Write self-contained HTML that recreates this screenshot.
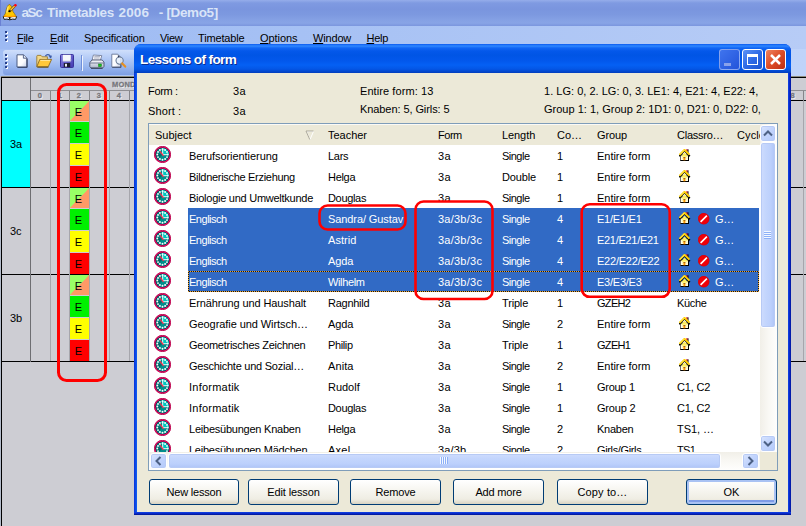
<!DOCTYPE html><html><head><meta charset="utf-8"><title>aSc Timetables 2006</title>
<style>
html,body{margin:0;padding:0}
body{width:806px;height:526px;overflow:hidden;position:relative;background:#cdcdd3;font-family:"Liberation Sans",sans-serif;font-size:11px;color:#000}
.a{position:absolute}
.t{position:absolute;white-space:pre;line-height:13px;height:13px}
#title{left:0;top:0;width:806px;height:26px;background:linear-gradient(#95adea 0px,#7f9ae1 3px,#7a95de 9px,#7d99e0 15px,#86a2e5 21px,#88a4e6 23px,#7b96de 26px)}
#title .cap{left:22px;top:4px;font-weight:bold;font-size:13.5px;line-height:17px;height:17px;color:#d9e4f8;white-space:pre}
#menubar{left:0;top:26px;width:806px;height:24px;background:linear-gradient(90deg,#9dbaf3 0,#a6c1f4 300px,#b7ccf6 806px)}
#tbdock{left:0;top:49px;width:806px;height:27px;background:linear-gradient(90deg,#a3bff4 0,#b4cbf7 300px,#bfd3f9 806px)}
#toolbar{left:3px;top:50px;width:140px;height:25px;border-radius:3px 0 0 3px;background:linear-gradient(#cfdffb 0,#b4cbf6 8px,#97b5ee 17px,#7e9fe3 25px)}
.mi u{text-decoration:underline;text-decoration-thickness:1px;text-underline-offset:1px}
.grip i{position:absolute;width:2px;height:2px;background:#27408b;box-shadow:1px 1px 0 #fff}
/* grid */
.vl{position:absolute;width:1px;background:#a6a6ac}
.hl{position:absolute;height:1px;background:#000}
.cell{position:absolute;left:70px;width:19px;text-align:center;font-size:11px}
.cell b{position:absolute;left:0;width:17px;text-align:center;font-weight:normal;line-height:13px}
.hn{position:absolute;font-weight:bold;font-size:7.5px;line-height:8px;color:#77777c;-webkit-text-stroke:.3px #77777c;text-shadow:1px 1px 0 #eeeef2;width:19px;text-align:center;top:92px}
/* dialog */
#dlg{left:134px;top:44px;width:657px;height:471px;border-radius:7px 7px 0 0;background:linear-gradient(90deg,#0831d9 0,#0c50ea 2px,#1260f2 3px,#1260f2 50%,#1046e8 654px,#0828c8 655.5px,#00169c 657px);overflow:hidden}
#dtitle{left:0;top:0;width:657px;height:29px;background:linear-gradient(#0a5af0 0,#2f88ff 2px,#1266f4 4px,#0458ea 7px,#0055e5 11px,#0358ec 17px,#0560f4 21px,#0456e6 25px,#0244c8 28px,#013cbc 29px)}
#dbody{left:3px;top:29px;width:651px;height:439px;background:#ece9d8}
#dbot{left:0;top:468px;width:657px;height:3px;background:linear-gradient(#1046e8 0,#0828c8 1.5px,#00148c 3px)}
#dtitle .cap{left:6px;top:8.2px;font-weight:bold;font-size:13.6px;line-height:16px;color:#fff;white-space:pre;text-shadow:1px 1px 0 #0a2c90}
.tb{position:absolute;top:5px;width:21px;height:21px;border-radius:3px;box-sizing:border-box;border:1px solid #fff}
#list{left:148px;top:123px;width:630px;height:348px;box-sizing:border-box;border:1px solid #7f9db9;background:#fff;overflow:hidden}
#lhead{left:0;top:0;width:628px;height:21px;background:#ece9d8;box-shadow:inset 0 1px 0 #fbfaf6}
.row{position:absolute;left:0;width:611px;height:21px}
.row .t{top:5px}
.sel{position:absolute;left:39px;top:0;width:571px;height:21px;background:#316ac5}
.rows-sel .t{color:#fff}
.btn{position:absolute;top:479px;height:26px;box-sizing:border-box;border:1px solid #003c74;border-radius:3px;background:linear-gradient(#fff 0,#f7f6f1 40%,#efede3 80%,#d8d3c2 100%);text-align:center;line-height:24px;font-size:11px}
</style></head><body>
<div id="title" class="a"><div class="a" style="left:0;top:0;width:1px;height:26px;background:#6a80d4"></div>
<svg class="a" style="left:2px;top:3px" width="17" height="18" viewBox="0 0 17 18"><path d="M1.2 13.6Q4.5 12.6 7.6 14.2Q10.8 12.6 14.6 13.6L13.6 16.4Q10.6 15.6 7.8 16.8Q4.8 15.6 2.2 16.4Z" fill="#f4f4f4" stroke="#1a1a1a" stroke-width="1"/><path d="M7.7 14V16.6" stroke="#111" stroke-width="1.4"/><path d="M7.4 1.2L9.6 3.4L11 8.6L12.4 10.6L14.2 13.4Q7.8 14.6 1.6 13.4L3.4 10.4L4.4 6.2L5.6 3Z" fill="#ffc800" stroke="#7a5a00" stroke-width=".6"/><path d="M2.6 12.2Q7.8 13.6 13.4 12.2L14.2 13.4Q7.8 14.6 1.6 13.4Z" fill="#ff9a00"/><path d="M6.2 3.4L4.8 9.6" stroke="#ffee80" stroke-width="1.2"/><path d="M13 2.6L8 7.8" stroke="#7a4a00" stroke-width="2.4"/><path d="M13 2.6L8.2 7.6" stroke="#ffcf40" stroke-width="1.3"/><circle cx="13.4" cy="2.3" r="1.3" fill="#ff0018"/><path d="M6.6 8.2L8.6 7L8.4 9.2Z" fill="#000"/><circle cx="7.3" cy="8.3" r="1" fill="#000"/></svg>
<div class="a cap" style="left:21.5px;letter-spacing:-1.41px;">aSc</div>
<div class="a cap" style="left:47.1px;letter-spacing:-0.35px;">Timetables</div>
<div class="a cap" style="left:118.5px;letter-spacing:0.16px;">2006</div>
<div class="a cap" style="left:158.8px;">-</div>
<div class="a cap" style="left:166.5px;letter-spacing:-0.39px;">[Demo5]</div>
</div>
<div id="menubar" class="a"></div>
<div id="tbdock" class="a"></div>
<div class="a grip" style="left:5px;top:31px"><i style="top:0"></i><i style="top:4px"></i><i style="top:8px"></i></div>
<div class="t mi" style="left:17px;top:32px;letter-spacing:-0.32px;"><u>F</u>ile</div>
<div class="t mi" style="left:50px;top:32px;letter-spacing:-0.16px;"><u>E</u>dit</div>
<div class="t mi" style="left:84px;top:32px;letter-spacing:-0.13px;">Specification</div>
<div class="t mi" style="left:160px;top:32px;letter-spacing:-0.33px;">View</div>
<div class="t mi" style="left:198px;top:32px;letter-spacing:-0.15px;">Timetable</div>
<div class="t mi" style="left:260px;top:32px;letter-spacing:-0.06px;"><u>O</u>ptions</div>
<div class="t mi" style="left:313px;top:32px;letter-spacing:-0.17px;"><u>W</u>indow</div>
<div class="t mi" style="left:366.5px;top:32px;letter-spacing:-0.29px;"><u>H</u>elp</div>
<div id="toolbar" class="a"></div>
<div class="a grip" style="left:5px;top:54px"><i style="top:0"></i><i style="top:4px"></i><i style="top:8px"></i><i style="top:12px"></i></div>
<svg class="a" style="left:16px;top:54px" width="12" height="14" viewBox="0 0 12 14"><defs><linearGradient id="gpg" x1="0" y1="0" x2="1" y2="1"><stop offset="0" stop-color="#fff"/><stop offset=".6" stop-color="#fbfcff"/><stop offset="1" stop-color="#c4cde4"/></linearGradient></defs><path d="M1 .8H7.6L10.8 4V13H1Z" fill="url(#gpg)" stroke="#4a5a80" stroke-width="1"/><path d="M7.4 .8V4.2H10.8" fill="#e8ecf8" stroke="#4a5a80" stroke-width=".9"/><path d="M1.6 13.4H11.2V4.6" fill="none" stroke="#2a3450" stroke-width=".8"/></svg>
<svg class="a" style="left:36px;top:53px" width="17" height="15" viewBox="0 0 17 15"><path d="M.8 13.6V3.2Q.8 2.4 1.6 2.4H5L6.2 3.8H11.4V6.2" fill="#f4d888" stroke="#9a7a30" stroke-width=".9"/><path d="M.8 13.8L3.8 6.4H15.6L12.2 13.8Z" fill="#ffc83a" stroke="#8a6a20" stroke-width=".9"/><path d="M4.4 7.4H14.2" stroke="#ffe9a0" stroke-width="1"/><path d="M1.4 14.2H12.4" stroke="#5a4410" stroke-width=".9"/><path d="M9.4 3Q11.6 .4 14 2.6L14.6 4.4" fill="none" stroke="#3a5aa8" stroke-width="1.2"/><path d="M12.6 3.4L15 5.6L16 2.4Z" fill="#3a5aa8"/></svg>
<svg class="a" style="left:60px;top:54px" width="14" height="14" viewBox="0 0 14 14"><defs><linearGradient id="gsv" x1="0" y1="0" x2="1" y2="1"><stop offset="0" stop-color="#8a84e4"/><stop offset="1" stop-color="#4038b0"/></linearGradient></defs><rect x=".5" y=".5" width="13" height="13" rx="1" fill="url(#gsv)" stroke="#3a349c" stroke-width="1"/><rect x="2.8" y=".8" width="8" height="6.4" fill="#f6f7fb"/><path d="M2.8 7.2H10.8V5" fill="none" stroke="#b8bcd8" stroke-width=".8"/><rect x="3.8" y="9" width="6.4" height="4.2" fill="#1c1c30"/><rect x="5" y="9.8" width="2" height="2.8" fill="#e8e8f0"/></svg>
<div class="a" style="left:81px;top:55px;width:1px;height:15px;background:#6f8fda"></div><div class="a" style="left:82px;top:56px;width:1px;height:15px;background:#eef3fd"></div>
<svg class="a" style="left:89px;top:54px" width="16" height="15" viewBox="0 0 16 15"><defs><linearGradient id="gpr" x1="0" y1="0" x2="0" y2="1"><stop offset="0" stop-color="#fdfdfe"/><stop offset="1" stop-color="#aab3c8"/></linearGradient></defs><path d="M4.4 1L12.8 1.6L11.4 6.2H3Z" fill="#fbfbfd" stroke="#6a7490" stroke-width=".8"/><path d="M5.4 2.6H11M5 4H10.6" stroke="#9aa0b4" stroke-width=".8"/><path d="M.8 8.6L3 6H13.2L15 8.2V12.4L13.6 14H2L.8 12.6Z" fill="url(#gpr)" stroke="#4a5470" stroke-width=".9"/><path d="M1 9H15" stroke="#5a6480" stroke-width=".8"/><path d="M2 14.3H13.6" stroke="#30384c" stroke-width=".9"/><rect x="9.6" y="10" width="2.8" height="2.6" fill="#18c020" stroke="#0a7a10" stroke-width=".5"/></svg>
<svg class="a" style="left:111px;top:53px" width="16" height="17" viewBox="0 0 16 17"><path d="M.8 1.2H6.8L9.6 4V14H.8Z" fill="url(#gpg)" stroke="#6a7898" stroke-width=".9"/><path d="M1.2 14.4H10V6" fill="none" stroke="#3a4460" stroke-width=".8"/><circle cx="8.6" cy="7.6" r="3.6" fill="#e6f0fb" fill-opacity=".85" stroke="#6a7c98" stroke-width="1.1"/><path d="M7 2.6L8.2 4" stroke="#26324e" stroke-width="1.2"/><path d="M11.2 10.4L14.2 13.6" stroke="#e89020" stroke-width="2.2" stroke-linecap="round"/></svg>
<div class="a" style="left:0;top:76px;width:806px;height:1px;background:#8c8b7e"></div>
<div class="a" style="left:0;top:77px;width:806px;height:1px;background:#000"></div>
<div class="a" style="left:0;top:76px;width:1px;height:450px;background:#b4bccb"></div>
<div class="a" style="left:1px;top:77px;width:1px;height:449px;background:#000"></div>
<div class="a" style="left:30px;top:90px;width:776px;height:1px;background:#8e8e92"></div>
<div class="hl" style="left:2px;top:100px;width:804px"></div>
<div class="hl" style="left:2px;top:187px;width:804px"></div>
<div class="hl" style="left:2px;top:274px;width:804px"></div>
<div class="hl" style="left:2px;top:361px;width:804px"></div>
<div class="vl" style="left:30px;top:78px;height:284px;background:#6e6e72"></div>
<div class="vl" style="left:50px;top:91px;height:10px;background:#85858a"></div>
<div class="vl" style="left:50px;top:101px;height:260px"></div>
<div class="vl" style="left:69px;top:91px;height:10px;background:#85858a"></div>
<div class="vl" style="left:69px;top:101px;height:260px"></div>
<div class="vl" style="left:89px;top:91px;height:10px;background:#85858a"></div>
<div class="vl" style="left:89px;top:101px;height:260px"></div>
<div class="vl" style="left:109px;top:91px;height:10px;background:#85858a"></div>
<div class="vl" style="left:109px;top:101px;height:260px"></div>
<div class="vl" style="left:129px;top:91px;height:10px;background:#85858a"></div>
<div class="vl" style="left:129px;top:101px;height:260px"></div>
<div class="vl" style="left:803px;top:91px;height:10px;background:#85858a"></div>
<div class="vl" style="left:803px;top:101px;height:260px"></div>
<div class="hn" style="left:30.3px">0</div>
<div class="hn" style="left:50.3px">1</div>
<div class="hn" style="left:69.3px">2</div>
<div class="hn" style="left:89.3px">3</div>
<div class="hn" style="left:109.3px">4</div>
<div class="hn" style="left:783px">8</div>
<div class="a" style="left:112px;top:81px;font-weight:bold;font-size:7.5px;line-height:8px;letter-spacing:.2px;color:#77777c;-webkit-text-stroke:.3px #77777c;text-shadow:1px 1px 0 #eeeef2">MONDAY</div>
<div class="a" style="left:2px;top:101px;width:28px;height:86px;background:#00ffff"></div>
<div class="t" style="left:10px;top:138px;font-size:11px">3a</div>
<div class="t" style="left:10px;top:225px;font-size:11px">3c</div>
<div class="t" style="left:10px;top:312px;font-size:11px">3b</div>
<div class="cell" style="top:101px;height:20px;background:linear-gradient(to bottom right,#99ff66 49.5%,#ff9966 50.5%)"><b style="top:5px">E</b></div>
<div class="cell" style="top:122px;height:21px;background:#00f000"><b style="top:5px">E</b></div>
<div class="cell" style="top:144px;height:21px;background:#ffff00"><b style="top:5px">E</b></div>
<div class="cell" style="top:166px;height:21px;background:#ff0000"><b style="top:5px">E</b></div>
<div class="cell" style="top:188px;height:20px;background:linear-gradient(to bottom right,#99ff66 49.5%,#ff9966 50.5%)"><b style="top:5px">E</b></div>
<div class="cell" style="top:209px;height:21px;background:#00f000"><b style="top:5px">E</b></div>
<div class="cell" style="top:231px;height:21px;background:#ffff00"><b style="top:5px">E</b></div>
<div class="cell" style="top:253px;height:21px;background:#ff0000"><b style="top:5px">E</b></div>
<div class="cell" style="top:275px;height:20px;background:linear-gradient(to bottom right,#99ff66 49.5%,#ff9966 50.5%)"><b style="top:5px">E</b></div>
<div class="cell" style="top:296px;height:21px;background:#00f000"><b style="top:5px">E</b></div>
<div class="cell" style="top:318px;height:21px;background:#ffff00"><b style="top:5px">E</b></div>
<div class="cell" style="top:340px;height:21px;background:#ff0000"><b style="top:5px">E</b></div>
<div id="dlg" class="a">
<div id="dtitle" class="a"><div class="a cap" style="letter-spacing:-0.64px;">Lessons of form</div>
<div class="tb" style="left:585.3px;border-color:rgba(255,255,255,.42);background:linear-gradient(135deg,#3f74ee,#2354da)"><div class="a" style="left:4px;top:12.5px;width:7px;height:3px;background:#8aa2ea"></div></div>
<div class="tb" style="left:608.3px;background:linear-gradient(135deg,#5d92f6 0,#2f6be6 50%,#1e55d0 100%)"><div class="a" style="left:4px;top:4px;width:11px;height:11px;box-sizing:border-box;border:1px solid #fff;border-top-width:3px"></div></div>
<div class="tb" style="left:631.2px;background:linear-gradient(135deg,#ee8460 0,#de4c26 50%,#bc2e14 100%)"><svg class="a" style="left:0;top:0" width="19" height="19" viewBox="0 0 19 19"><path d="M5 5L14 14M14 5L5 14" stroke="#fff" stroke-width="2.5" stroke-linecap="butt"/></svg></div>
</div>
<div id="dbody" class="a"></div><div id="dbot" class="a"></div>
</div>
<div class="t" style="left:148px;top:85px;letter-spacing:-0.32px;">Form :</div>
<div class="t" style="left:233px;top:85px;letter-spacing:0.50px;">3a</div>
<div class="t" style="left:148px;top:105px;letter-spacing:0.12px;">Short :</div>
<div class="t" style="left:233px;top:105px;letter-spacing:0.50px;">3a</div>
<div class="t" style="left:360px;top:85px;letter-spacing:0.08px;">Entire form: 13</div>
<div class="t" style="left:360px;top:103px;letter-spacing:-0.08px;">Knaben: 5, Girls: 5</div>
<div class="t" style="left:544px;top:85px;letter-spacing:0.02px;">1. LG: 0, 2. LG: 0, 3. LE1: 4, E21: 4, E22: 4,</div>
<div class="t" style="left:544px;top:103px;letter-spacing:0.01px;">Group 1: 1, Group 2: 1D1: 0, D21: 0, D22: 0,</div>
<div id="list" class="a">
<div id="lhead" class="a">
<div class="t" style="left:6px;top:5px;letter-spacing:-0.03px;">Subject</div>
<div class="t" style="left:179px;top:5px;letter-spacing:-0.02px;">Teacher</div>
<div class="t" style="left:289px;top:5px;letter-spacing:-0.48px;">Form</div>
<div class="t" style="left:353px;top:5px;letter-spacing:-0.08px;">Length</div>
<div class="t" style="left:408px;top:5px;letter-spacing:-0.03px;">Co…</div>
<div class="t" style="left:448px;top:5px;letter-spacing:-0.13px;">Group</div>
<div class="t" style="left:528px;top:5px;letter-spacing:-0.24px;">Classro…</div>
<div class="t" style="left:588px;top:5px;letter-spacing:0.11px;">Cycle</div>
<svg class="a" style="left:156px;top:6px" width="10" height="11" viewBox="0 0 10 11"><path d="M1.5 1.5H8.5L5 9.5Z" fill="none" stroke="#fff" stroke-width="1"/><path d="M1 1H8.5M1 1L4.8 9.6" fill="none" stroke="#aca899" stroke-width="1"/></svg>
</div>
<div class="row" style="top:21px">
<svg class="a" style="left:5px;top:1px" width="17" height="17"><use href="#clk"/></svg>
<div class="t" style="left:40px;letter-spacing:-0.06px;">Berufsorientierung</div>
<div class="t" style="left:179px;letter-spacing:-0.29px;">Lars</div>
<div class="t" style="left:289px;letter-spacing:0.50px;">3a</div>
<div class="t" style="left:353px;letter-spacing:-0.51px;">Single</div>
<div class="t" style="left:408px;letter-spacing:-0.20px;">1</div>
<div class="t" style="left:448px;letter-spacing:-0.03px;">Entire form</div>
<svg class="a" style="left:530px;top:4px" width="12" height="13"><use href="#house"/></svg>
</div>
<div class="row" style="top:42px">
<svg class="a" style="left:5px;top:1px" width="17" height="17"><use href="#clk"/></svg>
<div class="t" style="left:40px;letter-spacing:-0.30px;">Bildnerische Erziehung</div>
<div class="t" style="left:179px;letter-spacing:-0.30px;">Helga</div>
<div class="t" style="left:289px;letter-spacing:0.50px;">3a</div>
<div class="t" style="left:353px;letter-spacing:-0.16px;">Double</div>
<div class="t" style="left:408px;letter-spacing:-0.20px;">1</div>
<div class="t" style="left:448px;letter-spacing:-0.03px;">Entire form</div>
<svg class="a" style="left:530px;top:4px" width="12" height="13"><use href="#house"/></svg>
</div>
<div class="row" style="top:63px">
<svg class="a" style="left:5px;top:1px" width="17" height="17"><use href="#clk"/></svg>
<div class="t" style="left:40px;letter-spacing:-0.26px;">Biologie und Umweltkunde</div>
<div class="t" style="left:179px;letter-spacing:-0.33px;">Douglas</div>
<div class="t" style="left:289px;letter-spacing:0.50px;">3a</div>
<div class="t" style="left:353px;letter-spacing:-0.51px;">Single</div>
<div class="t" style="left:408px;letter-spacing:-0.20px;">1</div>
<div class="t" style="left:448px;letter-spacing:-0.03px;">Entire form</div>
<svg class="a" style="left:530px;top:4px" width="12" height="13"><use href="#house"/></svg>
</div>
<div class="row rows-sel" style="top:84px">
<div class="sel"></div>
<svg class="a" style="left:5px;top:1px" width="17" height="17"><use href="#clk"/></svg>
<div class="t" style="left:40px;letter-spacing:-0.48px;">Englisch</div>
<div class="t" style="left:179px;letter-spacing:-0.09px;">Sandra/ Gustav</div>
<div class="t" style="left:289px;letter-spacing:0.24px;">3a/3b/3c</div>
<div class="t" style="left:353px;letter-spacing:-0.51px;">Single</div>
<div class="t" style="left:408px;letter-spacing:-0.20px;">4</div>
<div class="t" style="left:448px;letter-spacing:-0.24px;">E1/E1/E1</div>
<svg class="a" style="left:530px;top:4px" width="12" height="13"><use href="#house"/></svg>
<svg class="a" style="left:549px;top:5px" width="12" height="12"><use href="#noent"/></svg>
<div class="t" style="left:566px;letter-spacing:-0.38px;">G…</div>
</div>
<div class="row rows-sel" style="top:105px">
<div class="sel"></div>
<svg class="a" style="left:5px;top:1px" width="17" height="17"><use href="#clk"/></svg>
<div class="t" style="left:40px;letter-spacing:-0.48px;">Englisch</div>
<div class="t" style="left:179px;letter-spacing:0.05px;">Astrid</div>
<div class="t" style="left:289px;letter-spacing:0.24px;">3a/3b/3c</div>
<div class="t" style="left:353px;letter-spacing:-0.51px;">Single</div>
<div class="t" style="left:408px;letter-spacing:-0.20px;">4</div>
<div class="t" style="left:448px;letter-spacing:-0.29px;">E21/E21/E21</div>
<svg class="a" style="left:530px;top:4px" width="12" height="13"><use href="#house"/></svg>
<svg class="a" style="left:549px;top:5px" width="12" height="12"><use href="#noent"/></svg>
<div class="t" style="left:566px;letter-spacing:-0.38px;">G…</div>
</div>
<div class="row rows-sel" style="top:126px">
<div class="sel"></div>
<svg class="a" style="left:5px;top:1px" width="17" height="17"><use href="#clk"/></svg>
<div class="t" style="left:40px;letter-spacing:-0.48px;">Englisch</div>
<div class="t" style="left:179px;letter-spacing:-0.12px;">Agda</div>
<div class="t" style="left:289px;letter-spacing:0.24px;">3a/3b/3c</div>
<div class="t" style="left:353px;letter-spacing:-0.51px;">Single</div>
<div class="t" style="left:408px;letter-spacing:-0.20px;">4</div>
<div class="t" style="left:448px;letter-spacing:-0.22px;">E22/E22/E22</div>
<svg class="a" style="left:530px;top:4px" width="12" height="13"><use href="#house"/></svg>
<svg class="a" style="left:549px;top:5px" width="12" height="12"><use href="#noent"/></svg>
<div class="t" style="left:566px;letter-spacing:-0.38px;">G…</div>
</div>
<div class="row rows-sel" style="top:147px">
<div class="sel"></div>
<svg class="a" style="left:5px;top:1px" width="17" height="17"><use href="#clk"/></svg>
<div class="t" style="left:40px;letter-spacing:-0.48px;">Englisch</div>
<div class="t" style="left:179px;letter-spacing:-0.37px;">Wilhelm</div>
<div class="t" style="left:289px;letter-spacing:0.24px;">3a/3b/3c</div>
<div class="t" style="left:353px;letter-spacing:-0.51px;">Single</div>
<div class="t" style="left:408px;letter-spacing:-0.20px;">4</div>
<div class="t" style="left:448px;letter-spacing:-0.24px;">E3/E3/E3</div>
<svg class="a" style="left:530px;top:4px" width="12" height="13"><use href="#house"/></svg>
<svg class="a" style="left:549px;top:5px" width="12" height="12"><use href="#noent"/></svg>
<div class="t" style="left:566px;letter-spacing:-0.38px;">G…</div>
</div>
<div class="row" style="top:168px">
<svg class="a" style="left:5px;top:1px" width="17" height="17"><use href="#clk"/></svg>
<div class="t" style="left:40px;letter-spacing:-0.10px;">Ernährung und Haushalt</div>
<div class="t" style="left:179px;letter-spacing:-0.26px;">Ragnhild</div>
<div class="t" style="left:289px;letter-spacing:0.50px;">3a</div>
<div class="t" style="left:353px;letter-spacing:-0.17px;">Triple</div>
<div class="t" style="left:408px;letter-spacing:-0.20px;">1</div>
<div class="t" style="left:448px;letter-spacing:-0.70px;">GZEH2</div>
<div class="t" style="left:528px;letter-spacing:-0.33px;">Küche</div>
</div>
<div class="row" style="top:189px">
<svg class="a" style="left:5px;top:1px" width="17" height="17"><use href="#clk"/></svg>
<div class="t" style="left:40px;letter-spacing:-0.07px;">Geografie und Wirtsch…</div>
<div class="t" style="left:179px;letter-spacing:-0.12px;">Agda</div>
<div class="t" style="left:289px;letter-spacing:0.50px;">3a</div>
<div class="t" style="left:353px;letter-spacing:-0.51px;">Single</div>
<div class="t" style="left:408px;letter-spacing:-0.20px;">2</div>
<div class="t" style="left:448px;letter-spacing:-0.03px;">Entire form</div>
<svg class="a" style="left:530px;top:4px" width="12" height="13"><use href="#house"/></svg>
</div>
<div class="row" style="top:210px">
<svg class="a" style="left:5px;top:1px" width="17" height="17"><use href="#clk"/></svg>
<div class="t" style="left:40px;letter-spacing:-0.27px;">Geometrisches Zeichnen</div>
<div class="t" style="left:179px;letter-spacing:-0.38px;">Philip</div>
<div class="t" style="left:289px;letter-spacing:0.50px;">3a</div>
<div class="t" style="left:353px;letter-spacing:-0.17px;">Triple</div>
<div class="t" style="left:408px;letter-spacing:-0.20px;">1</div>
<div class="t" style="left:448px;letter-spacing:-0.70px;">GZEH1</div>
<svg class="a" style="left:530px;top:4px" width="12" height="13"><use href="#house"/></svg>
</div>
<div class="row" style="top:231px">
<svg class="a" style="left:5px;top:1px" width="17" height="17"><use href="#clk"/></svg>
<div class="t" style="left:40px;letter-spacing:-0.25px;">Geschichte und Sozial…</div>
<div class="t" style="left:179px;letter-spacing:0.09px;">Anita</div>
<div class="t" style="left:289px;letter-spacing:0.50px;">3a</div>
<div class="t" style="left:353px;letter-spacing:-0.51px;">Single</div>
<div class="t" style="left:408px;letter-spacing:-0.20px;">2</div>
<div class="t" style="left:448px;letter-spacing:-0.03px;">Entire form</div>
<svg class="a" style="left:530px;top:4px" width="12" height="13"><use href="#house"/></svg>
</div>
<div class="row" style="top:252px">
<svg class="a" style="left:5px;top:1px" width="17" height="17"><use href="#clk"/></svg>
<div class="t" style="left:40px;letter-spacing:0.23px;">Informatik</div>
<div class="t" style="left:179px;letter-spacing:-0.02px;">Rudolf</div>
<div class="t" style="left:289px;letter-spacing:0.50px;">3a</div>
<div class="t" style="left:353px;letter-spacing:-0.51px;">Single</div>
<div class="t" style="left:408px;letter-spacing:-0.20px;">1</div>
<div class="t" style="left:448px;letter-spacing:-0.27px;">Group 1</div>
<div class="t" style="left:528px;letter-spacing:-0.17px;">C1, C2</div>
</div>
<div class="row" style="top:273px">
<svg class="a" style="left:5px;top:1px" width="17" height="17"><use href="#clk"/></svg>
<div class="t" style="left:40px;letter-spacing:0.23px;">Informatik</div>
<div class="t" style="left:179px;letter-spacing:-0.33px;">Douglas</div>
<div class="t" style="left:289px;letter-spacing:0.50px;">3a</div>
<div class="t" style="left:353px;letter-spacing:-0.51px;">Single</div>
<div class="t" style="left:408px;letter-spacing:-0.20px;">1</div>
<div class="t" style="left:448px;letter-spacing:-0.19px;">Group 2</div>
<div class="t" style="left:528px;letter-spacing:-0.17px;">C1, C2</div>
</div>
<div class="row" style="top:294px">
<svg class="a" style="left:5px;top:1px" width="17" height="17"><use href="#clk"/></svg>
<div class="t" style="left:40px;letter-spacing:-0.23px;">Leibesübungen Knaben</div>
<div class="t" style="left:179px;letter-spacing:-0.30px;">Helga</div>
<div class="t" style="left:289px;letter-spacing:0.50px;">3a</div>
<div class="t" style="left:353px;letter-spacing:-0.51px;">Single</div>
<div class="t" style="left:408px;letter-spacing:-0.20px;">2</div>
<div class="t" style="left:448px;letter-spacing:-0.26px;">Knaben</div>
<div class="t" style="left:528px;letter-spacing:-0.05px;">TS1, …</div>
</div>
<div class="row" style="top:315px">
<svg class="a" style="left:5px;top:1px" width="17" height="17"><use href="#clk"/></svg>
<div class="t" style="left:40px;letter-spacing:-0.25px;">Leibesübungen Mädchen</div>
<div class="t" style="left:179px;letter-spacing:0.26px;">Axel</div>
<div class="t" style="left:289px;letter-spacing:0.17px;">3a/3b</div>
<div class="t" style="left:353px;letter-spacing:-0.51px;">Single</div>
<div class="t" style="left:408px;letter-spacing:-0.20px;">2</div>
<div class="t" style="left:448px;letter-spacing:-0.36px;">Girls/Girls</div>
<div class="t" style="left:528px;letter-spacing:-0.70px;">TS1</div>
</div>
<div class="a" style="left:39px;top:147px;width:571px;height:21px;background:repeating-linear-gradient(90deg,#eca732 0 1px,#14141c 1px 2px) 0 0/100% 1px no-repeat,repeating-linear-gradient(90deg,#eca732 0 1px,#14141c 1px 2px) 0 100%/100% 1px no-repeat,repeating-linear-gradient(#eca732 0 1px,#14141c 1px 2px) 0 0/1px 100% no-repeat,repeating-linear-gradient(#eca732 0 1px,#14141c 1px 2px) 100% 0/1px 100% no-repeat"></div>
<div class="a" style="left:611px;top:0;width:17px;height:328px;background:linear-gradient(90deg,#f1efe8 0,#f9f8f4 50%,#fefefd 100%)"></div>
<div class="a" style="left:611px;top:1px;width:16px;height:17px;box-sizing:border-box;border:1px solid #fff;border-radius:3px;background:linear-gradient(135deg,#dbe6fe 0,#c3d5fd 45%,#b3c9fa 100%);box-shadow:inset 0 0 0 1px #b7caf5"><svg class="a" style="left:0;top:0" width="15" height="15" viewBox="0 0 15 15"><path d="M3 9.5L7 5.5L11 9.5" fill="none" stroke="#4d6185" stroke-width="2"/></svg></div>
<div class="a" style="left:611px;top:311px;width:16px;height:17px;box-sizing:border-box;border:1px solid #fff;border-radius:3px;background:linear-gradient(135deg,#dbe6fe 0,#c3d5fd 45%,#b3c9fa 100%);box-shadow:inset 0 0 0 1px #b7caf5"><svg class="a" style="left:0;top:0" width="15" height="15" viewBox="0 0 15 15"><path d="M3 5.5L7 9.5L11 5.5" fill="none" stroke="#4d6185" stroke-width="2"/></svg></div>
<div class="a" style="left:611px;top:18px;width:16px;height:186px;box-sizing:border-box;border:1px solid #fff;border-radius:3px;background:linear-gradient(90deg,#cfdcfd 0,#c4d6fd 30%,#bcd0fc 70%,#aec4f7 100%);box-shadow:inset 0 0 0 1px #b7caf5"><div class="a" style="left:3px;top:88px;width:7px;height:8px;background:repeating-linear-gradient(#f4f8ff 0,#f4f8ff 1px,#8cb0f8 1px,#8cb0f8 2px)"></div></div>
<div class="a" style="left:0;top:328px;width:611px;height:18px;background:linear-gradient(#f1efe8 0,#f9f8f4 50%,#fefefd 100%)"></div>
<div class="a" style="left:611px;top:328px;width:17px;height:18px;background:#ece9d8"></div>
<div class="a" style="left:1px;top:329px;width:17px;height:16px;box-sizing:border-box;border:1px solid #fff;border-radius:3px;background:linear-gradient(135deg,#dbe6fe 0,#c3d5fd 45%,#b3c9fa 100%);box-shadow:inset 0 0 0 1px #b7caf5"><svg class="a" style="left:0;top:0" width="15" height="15" viewBox="0 0 15 15"><path d="M9.5 3L5.5 7L9.5 11" fill="none" stroke="#4d6185" stroke-width="2"/></svg></div>
<div class="a" style="left:593px;top:329px;width:17px;height:16px;box-sizing:border-box;border:1px solid #fff;border-radius:3px;background:linear-gradient(135deg,#dbe6fe 0,#c3d5fd 45%,#b3c9fa 100%);box-shadow:inset 0 0 0 1px #b7caf5"><svg class="a" style="left:0;top:0" width="15" height="15" viewBox="0 0 15 15"><path d="M5.5 3L9.5 7L5.5 11" fill="none" stroke="#4d6185" stroke-width="2"/></svg></div>
<div class="a" style="left:18.5px;top:329px;width:553px;height:16px;box-sizing:border-box;border:1px solid #fff;border-radius:3px;background:linear-gradient(#cfdcfd 0,#c4d6fd 30%,#bcd0fc 70%,#aec4f7 100%);box-shadow:inset 0 0 0 1px #b7caf5"><div class="a" style="left:271.5px;top:3px;width:8px;height:7px;background:repeating-linear-gradient(90deg,#f4f8ff 0,#f4f8ff 1px,#8cb0f8 1px,#8cb0f8 2px)"></div></div>
</div>
<div class="btn" style="left:149px;width:90px;letter-spacing:-0.20px;">New lesson</div>
<div class="btn" style="left:248px;width:91px;letter-spacing:-0.13px;">Edit lesson</div>
<div class="btn" style="left:350px;width:91px;letter-spacing:-0.18px;">Remove</div>
<div class="btn" style="left:453px;width:91px;letter-spacing:-0.20px;">Add more</div>
<div class="btn" style="left:557px;width:91px;letter-spacing:0.14px;">Copy to…</div>
<div class="btn" style="left:686px;width:91px;box-shadow:inset 0 0 0 2px #a9c2f3,inset 0 -2px 0 2px #7d9be6">OK</div>
<svg class="a" style="left:0;top:0" width="806" height="526" viewBox="0 0 806 526" fill="none" stroke="#ff0000" stroke-width="3">
<rect x="58.5" y="84.5" width="47" height="296" rx="8"/>
<rect x="319.5" y="205.5" width="86" height="24" rx="8" stroke-width="2.6"/>
<rect x="415.5" y="201.5" width="77" height="97.5" rx="8" stroke-width="2.6"/>
<rect x="581.7" y="204.3" width="88" height="92.5" rx="8" stroke-width="2.6"/>
</svg>
<svg width="0" height="0" style="position:absolute"><defs>
<g id="clk"><circle cx="8.5" cy="8.5" r="8.3" fill="#f4106c"/><circle cx="8.5" cy="8.5" r="8.2" fill="none" stroke="#b00048" stroke-width="0.8"/><circle cx="8.5" cy="8.5" r="7.1" fill="#2c0826"/><circle cx="8.5" cy="8.5" r="6.6" fill="#008e8c"/><path d="M8.5 8.5V2A6.5 6.5 0 0 1 15 8.5Z" fill="#00c4bc"/><path d="M8.5 8.5L3.6 13.2A6.2 6.2 0 0 1 2.4 7Z" fill="#006a6a"/><circle cx="8.50" cy="3.30" r="0.95" fill="#fff"/><circle cx="11.10" cy="4.00" r="0.95" fill="#fff"/><circle cx="13.00" cy="5.90" r="0.95" fill="#fff"/><circle cx="13.70" cy="8.50" r="0.95" fill="#fff"/><circle cx="13.00" cy="11.10" r="0.95" fill="#fff"/><circle cx="11.10" cy="13.00" r="0.95" fill="#fff"/><circle cx="8.50" cy="13.70" r="0.95" fill="#fff"/><circle cx="5.90" cy="13.00" r="0.95" fill="#fff"/><circle cx="4.00" cy="11.10" r="0.95" fill="#fff"/><circle cx="3.30" cy="8.50" r="0.95" fill="#fff"/><circle cx="4.00" cy="5.90" r="0.95" fill="#fff"/><circle cx="5.90" cy="4.00" r="0.95" fill="#fff"/><path d="M8.7 2.8V8.7H14.2" fill="none" stroke="#eaffff" stroke-width="1"/><path d="M5.8 5.2L9.6 9.8" stroke="#ff2a4a" stroke-width="1.3"/></g>
<g id="house"><rect x="1.5" y="6" width="8" height="5.5" fill="#fffde8" stroke="#000" stroke-width="1"/><path d="M1.5 6.5V11.5" stroke="#707070" stroke-width="1"/><path d="M2.6 6.8L5.5 3.8L8.6 6.8V7.8H2.6Z" fill="#fff060"/><rect x="3" y="8.6" width="1" height="1" fill="#fff66a"/><rect x="7.4" y="8.6" width="1" height="1" fill="#fff66a"/><rect x="4.4" y="8.3" width="2" height="3" fill="#ff9a00"/><rect x="4.4" y="8.1" width="2" height="1" fill="#a06000"/><rect x="7.2" y="0.3" width="1.4" height="2.6" fill="#f0001c"/><rect x="8.5" y="0.3" width="1" height="4.6" fill="#000"/><path d="M0.2 7.1L5.5 1.8L10.9 7.2" fill="none" stroke="#000" stroke-width="1.6"/><path d="M0.4 5.9L5.5 .8L10.4 5.7" fill="none" stroke="#ffd200" stroke-width="1.9"/><path d="M1 5.3L5.4 .9" fill="none" stroke="#fff08a" stroke-width=".7"/></g>
<g id="noent"><circle cx="5.7" cy="5.7" r="5.6" fill="#f00008"/><circle cx="5.7" cy="5.7" r="5.3" fill="none" stroke="#d00010" stroke-width=".6"/><path d="M2.6 8.9L8.9 2.6" stroke="#fff" stroke-width="1.6"/></g>
</defs></svg>
</body></html>
